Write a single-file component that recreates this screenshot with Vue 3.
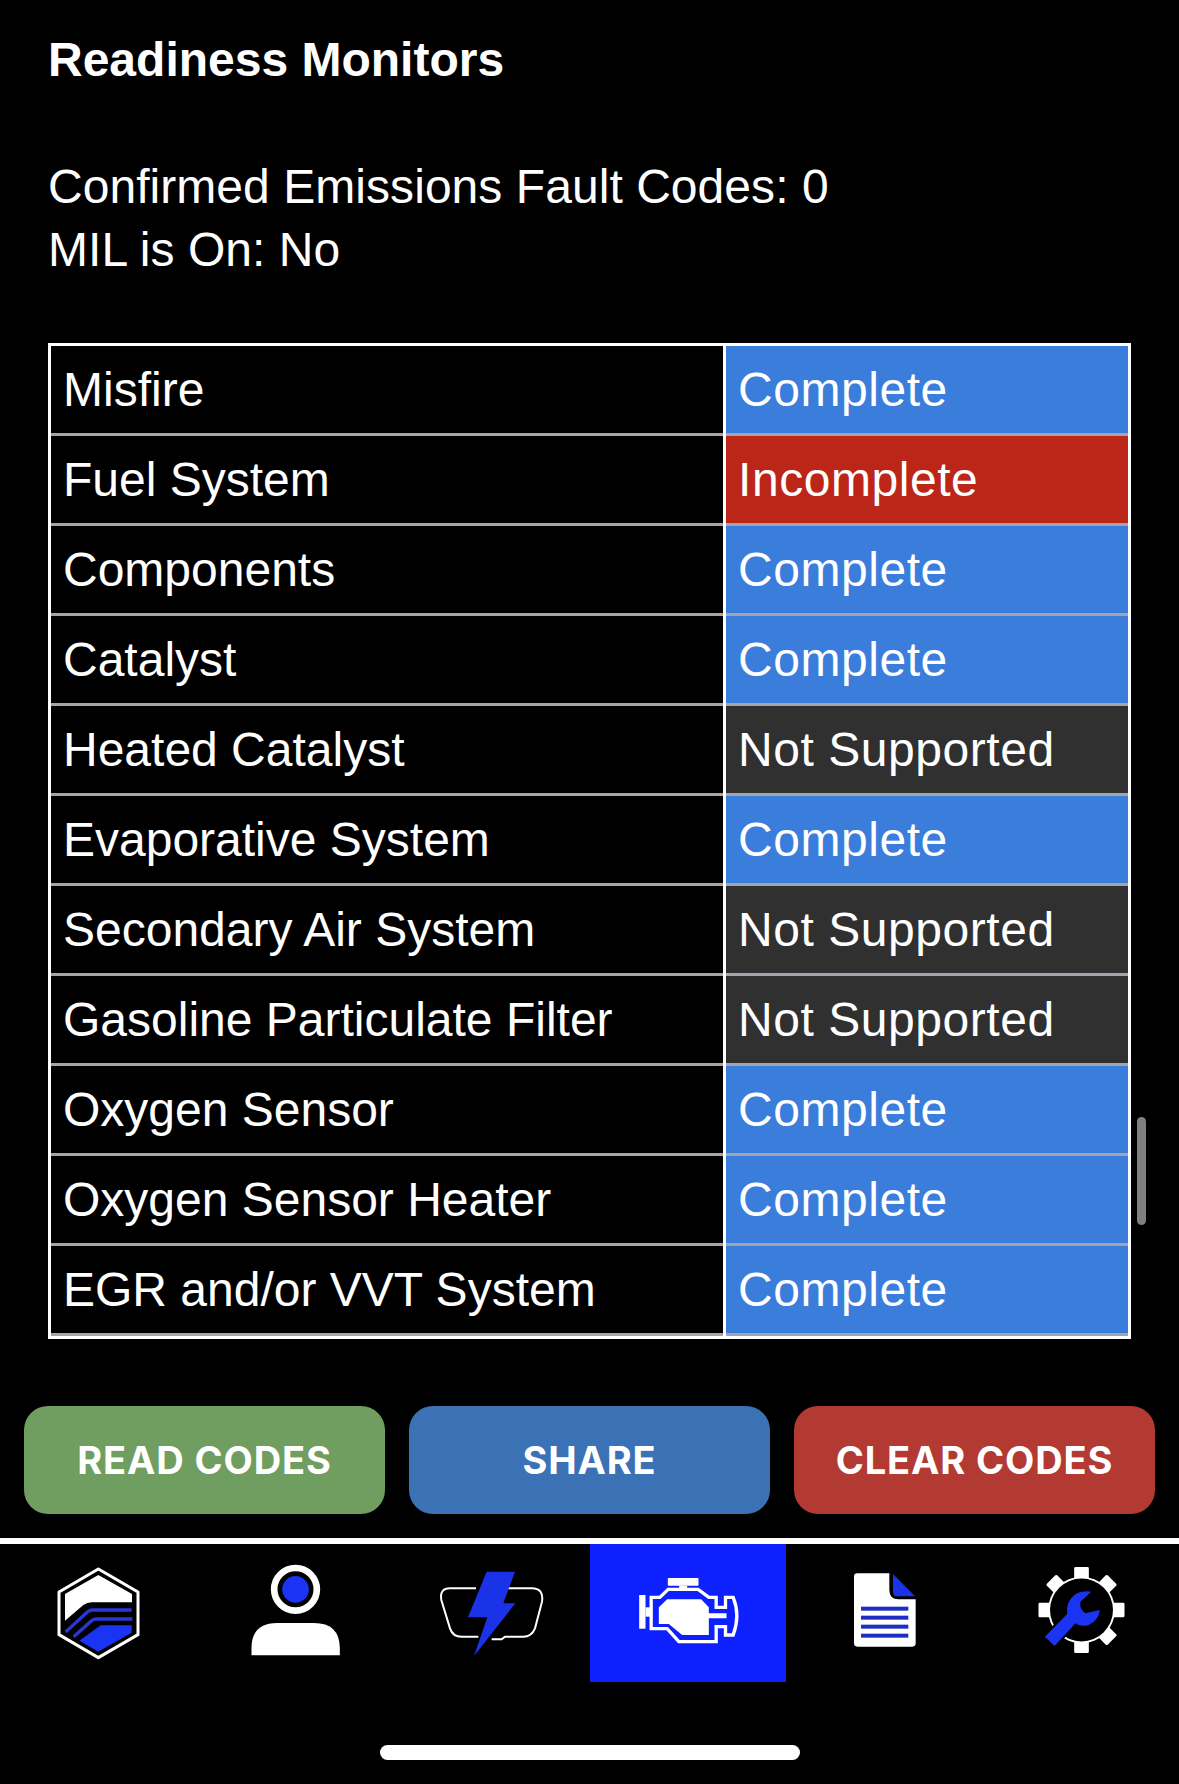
<script setup>
const rows = [
  ['Misfire', 'Complete'],
  ['Fuel System', 'Incomplete'],
  ['Components', 'Complete'],
  ['Catalyst', 'Complete'],
  ['Heated Catalyst', 'Not Supported'],
  ['Evaporative System', 'Complete'],
  ['Secondary Air System', 'Not Supported'],
  ['Gasoline Particulate Filter', 'Not Supported'],
  ['Oxygen Sensor', 'Complete'],
  ['Oxygen Sensor Heater', 'Complete'],
  ['EGR and/or VVT System', 'Complete'],
]
const statusClass = (s) => ({
  Complete: 'ok',
  Incomplete: 'bad',
  'Not Supported': 'na',
}[s])
const teeth = [0, 45, 90, 135, 180, 225, 270, 315]
</script>

<template>
  <div class="page">
    <main class="content">
      <h1 class="title">Readiness Monitors</h1>
      <p class="summary">Confirmed Emissions Fault Codes: 0<br />MIL is On: No</p>
      <div class="table">
        <div v-for="r in rows" :key="r[0]" class="row">
          <div class="name">{{ r[0] }}</div>
          <div class="status" :class="statusClass(r[1])">{{ r[1] }}</div>
        </div>
      </div>
      <div class="scrollbar"></div>
    </main>

    <div class="actions">
      <button class="btn green">READ CODES</button>
      <button class="btn blue">SHARE</button>
      <button class="btn red">CLEAR CODES</button>
    </div>

    <nav class="tabs">
      <div class="tab">
        <svg viewBox="0 72 589.5 414">
          <polygon points="295,147 414,216 414,344 295,413 177,344 177,216" fill="none" stroke="#fff" stroke-width="9" stroke-linejoin="round" />
          <path d="M295,165 L396,222 V247 H275 Q262,247 250,255 L195,302 V222 Z" fill="#fff" />
          <path d="M395,270 H278 Q270,270 262,276 L197,336" fill="none" stroke="#2a37d6" stroke-width="10" />
          <path d="M397,297 H290 Q282,297 275,302 L221,350" fill="none" stroke="#2a37d6" stroke-width="10" />
          <path d="M395,316 H302 L238,362 L295,395 L395,338 Z" fill="#1b33f2" />
        </svg>
      </div>
      <div class="tab">
        <svg viewBox="589.5 72 589.5 414">
          <circle cx="885" cy="208" r="64" fill="none" stroke="#fff" stroke-width="20" />
          <circle cx="885" cy="208" r="40" fill="#1b33f2" />
          <path d="M753,406 V385 Q753,309 830,309 H940 Q1018,309 1018,385 V406 Z" fill="#fff" />
        </svg>
      </div>
      <div class="tab">
        <svg viewBox="-21 72 589.5 414">
          <path d="M228,205 H150 Q118,205 124,240 L150,325 Q158,350 185,350 H235" fill="none" stroke="#fff" stroke-width="6" />
          <path d="M275,358 H305 L315,350 H370 Q395,350 405,325 L426,245 Q432,205 395,205 H322" fill="none" stroke="#fff" stroke-width="6" />
          <polygon points="260,155 345,155 310,250 346,250 222,408 262,292 204,292" fill="#1b33e8" />
        </svg>
      </div>
      <div class="tab active">
        <svg viewBox="568.5 72 589.5 414">
          <rect x="802" y="174" width="92" height="23" rx="2" fill="#fff" />
          <rect x="836" y="197" width="24" height="12" fill="#fff" />
          <rect x="716" y="225" width="19" height="101" fill="#fff" />
          <rect x="735" y="262" width="18" height="28" fill="#fff" />
          <path d="M752,326 V232 H778 L803,208 H893 L925,232 H947 V262 H975 V232 H998 Q1020,285 998,345 H975 V320 H947 V365 H835 L800,326 Z" fill="none" stroke="#fff" stroke-width="10" />
          <path d="M775,262 L800,238 H902 L925,262 V280 H978 V295 H925 V345 H845 L805,312 H775 Z" fill="#fff" />
        </svg>
      </div>
      <div class="tab">
        <svg viewBox="18 72 589.5 414">
          <path d="M232,160 H328 V210 Q328,238 355,238 H407 V370 Q407,380 397,380 H232 Q222,380 222,370 V170 Q222,160 232,160 Z" fill="#fff" />
          <path d="M339,162 L405,229 H352 Q339,229 339,215 Z" fill="#1b33e8" />
          <rect v-for="y in [260, 287, 314, 341]" :key="y" x="243" :y="y" width="142" height="12" fill="#1c2fc0" />
        </svg>
      </div>
      <div class="tab">
        <svg viewBox="607.5 72 589.5 414">
          <rect v-for="a in teeth" :key="a" x="881" y="141" width="44" height="38" rx="4" fill="#fff" :transform="`rotate(${a} 903 270)`" />
          <circle cx="903" cy="270" r="100" fill="#fff" />
          <circle cx="903" cy="270" r="94.5" fill="#000" />
          <path d="M793,350 L860,282 Q855,245 885,222 Q905,210 932,215 L900,245 Q895,265 915,280 L958,270 Q955,300 925,315 Q900,322 885,310 L822,378 Z" fill="#1b33f2" stroke="#000" stroke-width="12" paint-order="stroke" stroke-linejoin="round" />
        </svg>
      </div>
    </nav>

    <div class="home-wrap"><div class="home"></div></div>
  </div>
</template>

<style scoped>
.page {
  position: relative;
  width: 1179px;
  height: 1784px;
  background: #000;
  color: #fff;
  font-family: "Liberation Sans", Arial, sans-serif;
  overflow: hidden;
}
.content {
  position: relative;
  height: 1406px;
  padding: 27px 48px 0;
  box-sizing: border-box;
}
.title {
  margin: 0;
  font-size: 48px;
  line-height: 66px;
  font-weight: 700;
}
.summary {
  margin: 62px 0 0;
  font-size: 48px;
  line-height: 63px;
  letter-spacing: 0.05px;
}
.table {
  margin-top: 62px;
  width: 1083px;
  box-sizing: border-box;
  border: 3px solid #fff;
}
.row {
  display: flex;
  height: 90px;
  font-size: 48px;
  line-height: 87px;
}
.name {
  width: 672px;
  padding-left: 12px;
  box-sizing: border-box;
  white-space: nowrap;
  border-bottom: 3px solid #a5a5a5;
}
.status {
  flex: 1;
  margin-left: 3px;
  padding-left: 12px;
  border-bottom: 3px solid #a0a6b0;
  box-shadow: -3px 0 0 #fff;
  letter-spacing: 0.55px;
  white-space: nowrap;
}
.ok { background: #3a7ddb; }
.bad { background: #bb2618; }
.na { background: #303030; }
.scrollbar {
  position: absolute;
  left: 1137px;
  top: 1117px;
  width: 9px;
  height: 108px;
  border-radius: 5px;
  background: #808080;
}
.actions {
  display: flex;
  gap: 24px;
  padding: 0 24px;
  height: 132px;
  box-sizing: border-box;
}
.btn {
  flex: 1;
  height: 108px;
  border: 0;
  border-radius: 24px;
  color: #fff;
  font-family: Inter, "Liberation Sans", sans-serif;
  font-size: 38px;
  letter-spacing: 0.9px;
  font-weight: 700;
  padding: 0;
}
.green { background: #6f9e60; }
.blue { background: #3b71b5; }
.red { background: #b23a33; }
.tabs {
  display: flex;
  height: 138px;
  border-top: 6px solid #fff;
}
.tab {
  flex: 1;
  height: 138px;
}
.tab svg {
  display: block;
  width: 100%;
  height: 100%;
}
.active { background: #0f20ff; }
.home-wrap {
  display: flex;
  justify-content: center;
  padding-top: 63px;
}
.home {
  width: 420px;
  height: 15px;
  border-radius: 8px;
  background: #fff;
}
</style>
